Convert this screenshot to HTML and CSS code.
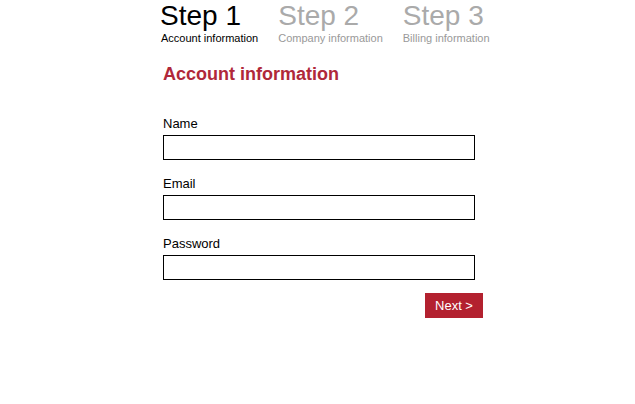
FILE: index.html
```html
<!DOCTYPE html>
<html>
<head>
<meta charset="utf-8">
<link rel="stylesheet" href="styles.css">
</head>
<body>
<div class="wizard">
  <ul class="steps">
    <li class="step active"><span class="step-title">Step 1</span><span class="step-sub">Account information</span></li>
    <li class="step"><span class="step-title">Step 2</span><span class="step-sub">Company information</span></li>
    <li class="step"><span class="step-title">Step 3</span><span class="step-sub">Billing information</span></li>
  </ul>
  <form class="form">
    <h2 class="form-title">Account information</h2>
    <div class="field">
      <label class="label">Name</label>
      <input class="input" type="text">
    </div>
    <div class="field">
      <label class="label">Email</label>
      <input class="input" type="text">
    </div>
    <div class="field">
      <label class="label">Password</label>
      <input class="input" type="password">
    </div>
    <div class="actions">
      <button class="btn" type="button">Next &gt;</button>
    </div>
  </form>
</div>
</body>
</html>
```
FILE: styles.css
```css
html, body {
  margin: 0;
  padding: 0;
  background: #fff;
}
body {
  font-family: "Liberation Sans", Arial, sans-serif;
  color: #000;
}
.wizard {
  margin-left: 160px;
  width: 323px;
}
.steps {
  list-style: none;
  margin: 0;
  padding: 0;
  display: flex;
  gap: 20px;
  white-space: nowrap;
}
.step {
  display: flex;
  flex-direction: column;
  flex-shrink: 0;
  color: #aaa;
}
.step.active {
  color: #000;
}
.step-title {
  font-size: 28px;
  line-height: 32px;
}
.step-sub {
  font-size: 11px;
  line-height: 13px;
}
.step.active .step-sub {
  padding-left: 1px;
}
.step:not(.active) .step-sub {
  color: #999;
}
.form {
  padding-left: 3px;
  margin: 0;
}
.form-title {
  margin: 19px 0 31px 0;
  font-size: 18px;
  line-height: 21px;
  font-weight: bold;
  color: #b0283a;
}
.field {
  display: flex;
  flex-direction: column;
  margin-bottom: 16px;
}
.label {
  font-size: 13px;
  line-height: 15px;
  margin-bottom: 4px;
}
.input {
  box-sizing: border-box;
  width: 312px;
  height: 25px;
  margin: 0;
  border: 1px solid #000;
  padding: 0 4px;
  font-family: inherit;
  font-size: 13px;
  background: #fff;
}
.actions {
  display: flex;
  justify-content: flex-end;
  margin-top: -3px;
}
.btn {
  box-sizing: border-box;
  height: 25px;
  width: 58px;
  padding: 0;
  border: none;
  background: #b3212f;
  color: #fff;
  font-family: inherit;
  font-size: 13px;
}
```
